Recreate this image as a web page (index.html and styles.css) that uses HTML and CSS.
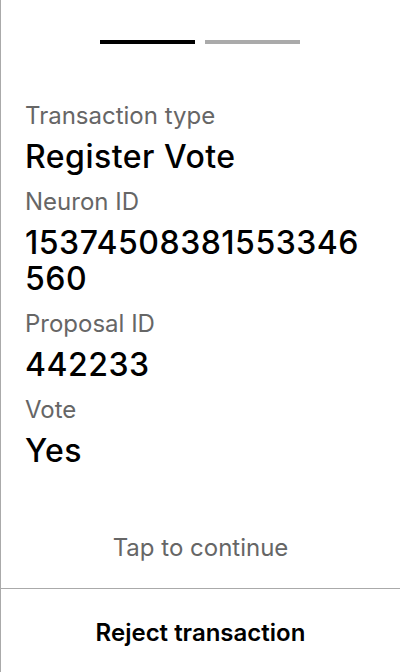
FILE: index.html
```html
<!DOCTYPE html>
<html>
<head>
<meta charset="utf-8">
<link rel="stylesheet" href="styles.css">
</head>
<body>
<div class="screen">
  <div class="progress">
    <div class="bar active"></div>
    <div class="bar"></div>
  </div>
  <div class="details">
    <div class="field">
      <div class="label">Transaction type</div>
      <div class="value">Register Vote</div>
    </div>
    <div class="field">
      <div class="label">Neuron ID</div>
      <div class="value">15374508381553346560</div>
    </div>
    <div class="field">
      <div class="label">Proposal ID</div>
      <div class="value">442233</div>
    </div>
    <div class="field">
      <div class="label">Vote</div>
      <div class="value">Yes</div>
    </div>
  </div>
  <div class="tap">Tap to continue</div>
  <div class="reject">Reject transaction</div>
</div>
</body>
</html>
```

FILE: styles.css
```css
* { box-sizing: border-box; }
html, body { margin: 0; padding: 0; background: #fff; }
body { font-family: Inter, "Noto Sans", sans-serif; }
.screen {
  width: 400px;
  height: 672px;
  border-left: 1px solid #aaaaaa;
  display: flex;
  flex-direction: column;
}
.progress {
  display: flex;
  gap: 10px;
  padding-top: 40px;
  padding-left: 99px;
}
.bar { width: 95px; height: 4px; background: #aaaaaa; }
.bar.active { background: #000; }
.details {
  padding: 57px 35px 0 24px;
  flex: 1;
}
.field { margin-bottom: 12px; }
.label {
  font-size: 24px;
  line-height: 30px;
  color: #666666;
}
.value {
  font-size: 32px;
  line-height: 36px;
  font-weight: 450;
  letter-spacing: 0.5px;
  color: #000;
  word-break: break-all;
  margin-top: 8px;
}
.tap {
  text-align: center;
  font-size: 24px;
  color: #666666;
  line-height: 30px;
  padding-bottom: 25px;
}
.reject {
  border-top: 1px solid #aaaaaa;
  height: 84px;
  padding-top: 3px;
  display: flex;
  align-items: center;
  justify-content: center;
  font-size: 24px;
  font-weight: 600;
  color: #000;
}
```
